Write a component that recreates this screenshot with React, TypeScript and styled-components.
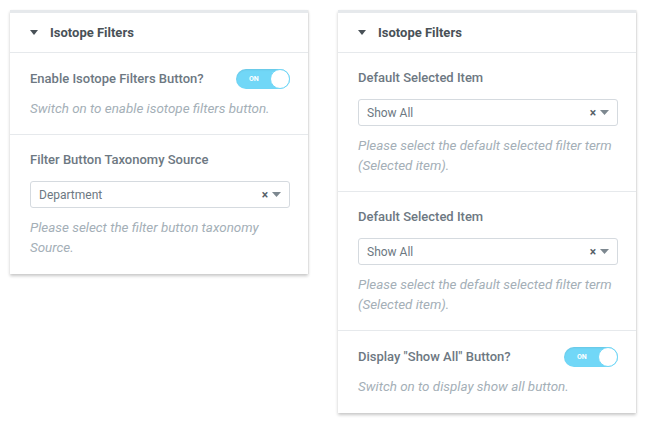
import React from "react";
import styled, { createGlobalStyle } from "styled-components";

const GlobalStyle = createGlobalStyle`
  body {
    margin: 0;
    background: #fff;
    font-family: Roboto, "Liberation Sans", Arial, sans-serif;
  }
`;

const Page = styled.div`
  display: flex;
  align-items: flex-start;
  gap: 30px;
  padding: 10px;
`;

const Panel = styled.section`
  width: 298px;
  background: #fff;
  border-top: 3px solid #e6e9ec;
  box-shadow: 0 2px 3px rgba(0, 0, 0, 0.22), 1px 0 1px rgba(0, 0, 0, 0.04);
`;

const Header = styled.div`
  display: flex;
  align-items: center;
  gap: 12px;
  height: 39px;
  padding: 0 20px;
  border-bottom: 1px solid #e6e9ec;
  font-size: 13px;
  font-weight: 700;
  color: #495157;
`;

const Section = styled.div<{ $last?: boolean }>`
  padding: 16px 18px ${(p) => (p.$last ? "16px" : "15px")} 20px;
  border-bottom: ${(p) => (p.$last ? "none" : "1px solid #e6e9ec")};
`;

const Row = styled.div`
  display: flex;
  align-items: center;
  justify-content: space-between;
  height: 20px;
`;

const Label = styled.div`
  font-size: 13px;
  font-weight: 500;
  line-height: 18px;
  color: #6d7882;
`;

const SelectBox = styled.div`
  display: flex;
  align-items: center;
  height: 25px;
  margin-top: 12px;
  padding: 0 8px;
  border: 1px solid #d5dadf;
  border-radius: 3px;
  font-size: 12px;
  color: #6d7882;
`;

const SelectText = styled.span`
  flex: 1;
`;

const Clear = styled.span`
  font-size: 12px;
  font-weight: 700;
  color: #556068;
  margin-right: 4px;
`;

const Desc = styled.p`
  margin: 10px 0 0;
  font-size: 13.4px;
  font-style: italic;
  line-height: 20px;
  color: #a4afb7;
`;

const Switch = styled.div`
  position: relative;
  width: 54px;
  height: 20px;
  border-radius: 10px;
  background: #71d7f7;
  box-shadow: inset 0 1px 2px rgba(0, 0, 0, 0.08);
`;

const SwitchText = styled.span`
  position: absolute;
  left: 13px;
  top: 0;
  line-height: 20px;
  font-size: 7px;
  font-weight: 700;
  color: #fff;
`;

const Knob = styled.span`
  position: absolute;
  right: 0;
  top: 0;
  width: 18px;
  height: 18px;
  border-radius: 50%;
  background: #fff;
  border: 1px solid #71d7f7;
`;

const Caret = () => (
  <svg width="8" height="5" viewBox="0 0 8 5">
    <path d="M0 0h8L4 5z" fill="#495157" />
  </svg>
);

const Arrow = () => (
  <svg width="9" height="5" viewBox="0 0 9 5">
    <path d="M0 0h9L4.5 5z" fill="#7d8890" />
  </svg>
);

const Toggle = () => (
  <Switch>
    <SwitchText>ON</SwitchText>
    <Knob />
  </Switch>
);

const Select = ({ value }: { value: string }) => (
  <SelectBox>
    <SelectText>{value}</SelectText>
    <Clear>×</Clear>
    <Arrow />
  </SelectBox>
);

export default function App() {
  return (
    <Page>
      <GlobalStyle />
      <Panel>
        <Header>
          <Caret />
          Isotope Filters
        </Header>
        <Section>
          <Row>
            <Label>Enable Isotope Filters Button?</Label>
            <Toggle />
          </Row>
          <Desc>Switch on to enable isotope filters button.</Desc>
        </Section>
        <Section $last>
          <Label>Filter Button Taxonomy Source</Label>
          <Select value="Department" />
          <Desc>Please select the filter button taxonomy Source.</Desc>
        </Section>
      </Panel>
      <Panel>
        <Header>
          <Caret />
          Isotope Filters
        </Header>
        <Section>
          <Label>Default Selected Item</Label>
          <Select value="Show All" />
          <Desc>Please select the default selected filter term (Selected item).</Desc>
        </Section>
        <Section>
          <Label>Default Selected Item</Label>
          <Select value="Show All" />
          <Desc>Please select the default selected filter term (Selected item).</Desc>
        </Section>
        <Section $last>
          <Row>
            <Label>Display "Show All" Button?</Label>
            <Toggle />
          </Row>
          <Desc>Switch on to display show all button.</Desc>
        </Section>
      </Panel>
    </Page>
  );
}
